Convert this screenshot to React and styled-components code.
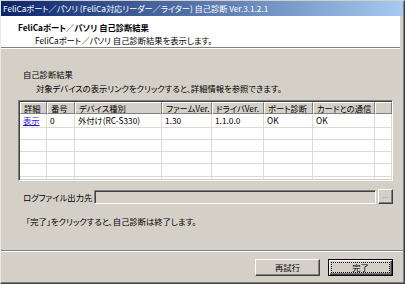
import React from "react";
import styled, { createGlobalStyle } from "styled-components";

const GlobalStyle = createGlobalStyle`
  html, body {
    margin: 0;
    padding: 0;
    background: #d4d0c8;
  }
  body {
    font-family: "Noto Sans CJK JP", "Noto Sans", sans-serif;
    font-size: 8.3px;
    font-feature-settings: "palt";
    color: #000;
  }
`;

const columns = [
  { key: "detail", label: "詳細", width: 27 },
  { key: "no", label: "番号", width: 28 },
  { key: "type", label: "デバイス種別", width: 87 },
  { key: "firm", label: "ファームVer.", width: 50 },
  { key: "driver", label: "ドライバVer.", width: 52 },
  { key: "port", label: "ポート診断", width: 49 },
  { key: "card", label: "カードとの通信", width: 62 },
  { key: "pad", label: "", width: 17 },
];

const rows = [
  { detail: "表示", no: "0", type: "外付け(RC-S330)", firm: "1.30", driver: "1.1.0.0", port: "OK", card: "OK" },
];

export default function App() {
  const rowHeights = [14, 12, 12, 12, 13, 12];

  return (
    <>
      <GlobalStyle />
      <Window>
        <TitleBar>FeliCaポート／パソリ (FeliCa対応リーダー／ライター) 自己診断 Ver.3.1.2.1</TitleBar>

        <Header>
          <HeaderTitle>FeliCaポート／パソリ 自己診断結果</HeaderTitle>
          <HeaderSub>FeliCaポート／パソリ 自己診断結果を表示します。</HeaderSub>
        </Header>

        <Body>
          <SectionLabel>自己診断結果</SectionLabel>
          <Hint>対象デバイスの表示リンクをクリックすると、詳細情報を参照できます。</Hint>

          <ListBox>
            <Grid>
              <thead>
                <tr>
                  {columns.map((c) => (
                    <HeadCell key={c.key} $w={c.width}>{c.label}</HeadCell>
                  ))}
                </tr>
              </thead>
              <tbody>
                {rowHeights.map((h, i) => {
                  const row = rows[i];
                  return (
                    <BodyRow key={i} $h={h}>
                      {columns.map((c) => (
                        <Cell key={c.key}>
                          {row && c.key === "detail" ? (
                            <LinkText href="#">{row.detail}</LinkText>
                          ) : (
                            row && row[c.key]
                          )}
                        </Cell>
                      ))}
                    </BodyRow>
                  );
                })}
              </tbody>
            </Grid>
          </ListBox>

          <LogRow>
            <LogLabel>ログファイル出力先</LogLabel>
            <PathField />
            <BrowseButton>...</BrowseButton>
          </LogRow>

          <FinishNote>「完了」をクリックすると、自己診断は終了します。</FinishNote>
        </Body>

        <Footer>
          <Button>再試行</Button>
          <Button $default>
            <FocusRing>完了</FocusRing>
          </Button>
        </Footer>
      </Window>
    </>
  );
}

const Window = styled.div`
  width: 405px;
  height: 284px;
  box-sizing: border-box;
  background: #d4d0c8;
  border-top: 1px solid #d4d0c8;
  border-left: 1px solid #ece9e4;
  border-right: 1px solid #404040;
  border-bottom: 1px solid #404040;
  box-shadow: inset -1px -1px 0 #808080;
  display: flex;
  flex-direction: column;
  overflow: hidden;
`;

const TitleBar = styled.div`
  height: 15px;
  margin-right: 1px;
  padding-left: 2px;
  background: linear-gradient(to right, #0a246a, #a6caf0);
  color: #fff;
  font-size: 8.2px;
  line-height: 15px;
  white-space: nowrap;
`;

const Header = styled.div`
  height: 32px;
  box-sizing: border-box;
  margin-right: 4px;
  background: #fff;
  border-bottom: 1px solid #808080;
  box-shadow: 0 1px 0 #fff;
  padding: 5px 0 0 17px;
`;

const HeaderTitle = styled.div`
  font-weight: bold;
  line-height: 13px;
`;

const HeaderSub = styled.div`
  line-height: 12px;
  padding-left: 17px;
`;

const Body = styled.div`
  padding: 0 11px 0 17px;
  display: flex;
  flex-direction: column;
`;

const SectionLabel = styled.div`
  margin-top: 20px;
  margin-left: 5px;
  line-height: 12px;
`;

const Hint = styled.div`
  margin-top: 2px;
  margin-left: 18px;
  line-height: 12px;
  white-space: nowrap;
`;

const ListBox = styled.div`
  margin-top: 6px;
  height: 81px;
  box-sizing: border-box;
  border-top: 1px solid #808080;
  border-left: 1px solid #808080;
  border-right: 1px solid #fff;
  border-bottom: 1px solid #fff;
  box-shadow: inset 1px 1px 0 #404040, inset -1px -1px 0 #d4d0c8;
  padding: 1px;
  background: #fff;
  overflow: hidden;
`;

const Grid = styled.table`
  table-layout: fixed;
  border-collapse: separate;
  border-spacing: 0;
  width: 372px;
  font-size: 8.3px;
`;

const HeadCell = styled.th`
  width: ${(p) => p.$w}px;
  height: 12px;
  padding: 0 0 0 3px;
  box-sizing: border-box;
  background: #d4d0c8;
  border-top: 1px solid #fff;
  border-left: 1px solid #fff;
  border-right: 1px solid #808080;
  border-bottom: 1px solid #808080;
  font-weight: normal;
  text-align: left;
  line-height: 10px;
  white-space: nowrap;
  overflow: hidden;
`;

const BodyRow = styled.tr`
  height: ${(p) => p.$h}px;
`;

const Cell = styled.td`
  padding: 0 0 0 3px;
  border-right: 1px solid #dedbd5;
  border-bottom: 1px solid #dedbd5;
  line-height: 11px;
  white-space: nowrap;
  overflow: hidden;
  vertical-align: middle;
`;

const LinkText = styled.a`
  color: #1a1ae6;
  text-decoration: underline;
`;

const LogRow = styled.div`
  margin-top: 8px;
  height: 15px;
  display: flex;
  align-items: center;
`;

const LogLabel = styled.span`
  margin-left: 5px;
  width: 71px;
  white-space: nowrap;
`;

const PathField = styled.div`
  width: 282px;
  height: 14px;
  box-sizing: border-box;
  background: #d4d0c8;
  border-top: 1px solid #808080;
  border-left: 1px solid #808080;
  border-right: 1px solid #fff;
  border-bottom: 1px solid #fff;
  box-shadow: inset 1px 1px 0 #404040, inset -1px -1px 0 #d4d0c8;
`;

const BrowseButton = styled.div`
  margin-left: 2px;
  width: 15px;
  height: 15px;
  box-sizing: border-box;
  background: #d4d0c8;
  border-top: 1px solid #fff;
  border-left: 1px solid #fff;
  border-right: 1px solid #404040;
  border-bottom: 1px solid #404040;
  box-shadow: inset -1px -1px 0 #808080;
  color: #9a968e;
  font-size: 7px;
  line-height: 11px;
  text-align: center;
`;

const FinishNote = styled.div`
  margin-top: 11px;
  margin-left: 8px;
  line-height: 12px;
  white-space: nowrap;
`;

const Footer = styled.div`
  margin-top: auto;
  margin-right: 1px;
  height: 33px;
  box-sizing: border-box;
  border-top: 1px solid #808080;
  box-shadow: inset 0 1px 0 #fff;
  padding: 8px 10px 0 0;
  display: flex;
  justify-content: flex-end;
  align-items: flex-start;
  gap: 8px;
`;

const Button = styled.div`
  width: 65px;
  height: 17px;
  box-sizing: border-box;
  background: #d4d0c8;
  border: 1px solid;
  border-color: ${(p) => (p.$default ? "#000" : "#fff #404040 #404040 #fff")};
  box-shadow: ${(p) =>
    p.$default
      ? "inset 1px 1px 0 #fff, inset -1px -1px 0 #404040, inset -2px -2px 0 #808080"
      : "inset -1px -1px 0 #808080"};
  display: flex;
  align-items: center;
  justify-content: center;
  padding: 2px;
  line-height: 11px;
`;

const FocusRing = styled.span`
  flex: 1;
  align-self: stretch;
  border: 1px dotted #000;
  text-align: center;
  line-height: 9px;
`;
